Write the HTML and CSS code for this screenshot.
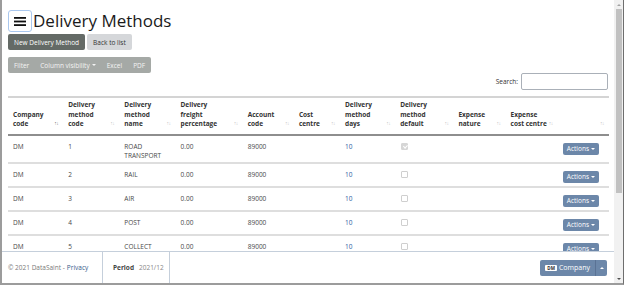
FILE: index.html
```html
<!DOCTYPE html>
<html>
<head>
  <title>Delivery Methods</title>
  <meta http-equiv="Content-Type" content="text/html;charset=utf-8" />
  <meta name="viewport" content="width=device-width">
  <link rel="stylesheet" href="styles.css">
</head>
<body>
<div class="window">
  <div class="page">
    <main class="content">
      <div class="heading">
        <button class="menu-toggle" type="button" aria-label="Toggle menu">
          <svg width="12" height="9" viewBox="0 0 12 9">
            <rect y="0" width="12" height="1.8"/>
            <rect y="3.6" width="12" height="1.8"/>
            <rect y="7.2" width="12" height="1.8"/>
          </svg>
        </button>
        <h1>Delivery Methods</h1>
      </div>

      <div class="toolbar">
        <a class="btn btn-dark" href="#">New Delivery Method</a>
        <a class="btn btn-light" href="#">Back to list</a>
      </div>

      <div class="dt-buttons">
        <button type="button">Filter</button>
        <button type="button">Column visibility <span class="caret"></span></button>
        <button type="button">Excel</button>
        <button type="button">PDF</button>
      </div>

      <div class="dt-search">
        <label for="search">Search:</label>
        <input type="text" id="search">
      </div>

      <table class="grid">
        <colgroup>
          <col style="width:55px"><col style="width:56px"><col style="width:56px">
          <col style="width:67px"><col style="width:51px"><col style="width:46px">
          <col style="width:55px"><col style="width:58px"><col style="width:52px">
          <col style="width:52px"><col style="width:51px">
        </colgroup>
        <thead>
          <tr>
            <th><div class="th-inner"><span>Company<br>code</span><span class="sort asc">↑↓</span></div></th>
            <th><div class="th-inner"><span>Delivery<br>method<br>code</span><span class="sort">↑↓</span></div></th>
            <th><div class="th-inner"><span>Delivery<br>method<br>name</span><span class="sort">↑↓</span></div></th>
            <th><div class="th-inner"><span>Delivery<br>freight<br>percentage</span><span class="sort">↑↓</span></div></th>
            <th><div class="th-inner"><span>Account<br>code</span><span class="sort">↑↓</span></div></th>
            <th><div class="th-inner"><span>Cost<br>centre</span><span class="sort">↑↓</span></div></th>
            <th><div class="th-inner"><span>Delivery<br>method<br>days</span><span class="sort">↑↓</span></div></th>
            <th><div class="th-inner"><span>Delivery<br>method<br>default</span><span class="sort">↑↓</span></div></th>
            <th><div class="th-inner"><span>Expense<br>nature</span><span class="sort">↑↓</span></div></th>
            <th><div class="th-inner"><span>Expense<br>cost centre</span><span class="sort">↑↓</span></div></th>
            <th><div class="th-inner"><span></span><span class="sort">↑↓</span></div></th>
          </tr>
        </thead>
        <tbody>
          <tr>
            <td>DM</td><td>1</td><td>ROAD<br>TRANSPORT</td><td>0.00</td><td>89000</td><td></td>
            <td><a href="#">10</a></td><td><input type="checkbox" checked disabled></td><td></td><td></td>
            <td class="cell-actions"><button class="btn-actions" type="button">Actions <span class="caret"></span></button></td>
          </tr>
          <tr>
            <td>DM</td><td>2</td><td>RAIL</td><td>0.00</td><td>89000</td><td></td>
            <td><a href="#">10</a></td><td><input type="checkbox" disabled></td><td></td><td></td>
            <td class="cell-actions"><button class="btn-actions" type="button">Actions <span class="caret"></span></button></td>
          </tr>
          <tr>
            <td>DM</td><td>3</td><td>AIR</td><td>0.00</td><td>89000</td><td></td>
            <td><a href="#">10</a></td><td><input type="checkbox" disabled></td><td></td><td></td>
            <td class="cell-actions"><button class="btn-actions" type="button">Actions <span class="caret"></span></button></td>
          </tr>
          <tr>
            <td>DM</td><td>4</td><td>POST</td><td>0.00</td><td>89000</td><td></td>
            <td><a href="#">10</a></td><td><input type="checkbox" disabled></td><td></td><td></td>
            <td class="cell-actions"><button class="btn-actions" type="button">Actions <span class="caret"></span></button></td>
          </tr>
          <tr>
            <td>DM</td><td>5</td><td>COLLECT</td><td>0.00</td><td>89000</td><td></td>
            <td><a href="#">10</a></td><td><input type="checkbox" disabled></td><td></td><td></td>
            <td class="cell-actions"><button class="btn-actions" type="button">Actions <span class="caret"></span></button></td>
          </tr>
        </tbody>
      </table>
    </main>

    <footer class="footer">
      <div class="copyright">&copy; 2021 DataSaint - <a href="#">Privacy</a></div>
      <div class="period"><b>Period</b> 2021/12</div>
      <div class="company-group">
        <button class="company-main" type="button"><span class="badge">DM</span>Company</button>
        <button class="company-toggle" type="button"><span class="caret-up"></span></button>
      </div>
    </footer>
  </div>

  <div class="scrollbar">
    <span class="sb-arrow up"></span>
    <span class="sb-thumb"></span>
    <span class="sb-track"></span>
    <span class="sb-arrow down"></span>
  </div>
</div>
</body>
</html>
```

FILE: styles.css
```css
html, body { margin: 0; }
body {
  font-family: "Open Sans", sans-serif;
  font-size: 6.5px;
  color: #444;
  background: #fff;
}
a { color: #2f62a3; text-decoration: none; }
button { font-family: inherit; }

.window {
  width: 624px;
  height: 285px;
  box-sizing: border-box;
  border-left: 2px solid #9c9c9c;
  border-bottom: 2px solid #9c9c9c;
  border-right: 1px solid #6e6e6e;
  display: flex;
  overflow: hidden;
}
.page {
  flex: 1;
  min-width: 0;
  display: flex;
  flex-direction: column;
}
.content {
  flex: 1;
  min-height: 0;
  overflow: hidden;
  padding: 10px 6px 0 6px;
}

/* heading */
.heading {
  display: flex;
  align-items: center;
  gap: 1px;
}
.menu-toggle {
  width: 24px;
  height: 22px;
  padding: 0;
  border: 1px solid #a9c7ee;
  border-radius: 3px;
  background: #fff;
  display: flex;
  align-items: center;
  justify-content: center;
}
.menu-toggle svg { fill: #111; }
.heading h1 {
  margin: 0;
  font-size: 17px;
  font-weight: 500;
  line-height: 22px;
  color: #1a1a1a;
}

/* toolbar buttons */
.toolbar {
  display: flex;
  gap: 2px;
  margin-top: 2px;
}
.btn {
  display: inline-flex;
  align-items: center;
  height: 16px;
  padding: 0 6px;
  border-radius: 2px;
  font-size: 6.5px;
}
.btn-dark { background: #646a66; color: #fff; }
.btn-light { background: #d5d7da; color: #333; }

.dt-buttons {
  display: inline-flex;
  margin-top: 7px;
  height: 16px;
  background: #a5a9a6;
  border-radius: 2px;
  padding: 0 0.5px;
}
.dt-buttons button {
  border: 0;
  background: none;
  color: #f4f4f4;
  font-size: 6.5px;
  padding: 0 5.5px;
  display: inline-flex;
  align-items: center;
  gap: 2px;
}
.caret {
  display: inline-block;
  width: 0;
  height: 0;
  border-top: 2px solid currentColor;
  border-left: 2px solid transparent;
  border-right: 2px solid transparent;
}

.dt-search {
  display: flex;
  justify-content: flex-end;
  align-items: center;
  gap: 3px;
}
.dt-search label { color: #333; }
.dt-search input {
  width: 87px;
  height: 17px;
  box-sizing: border-box;
  border: 1px solid #aab0b8;
  border-radius: 2px;
  padding: 0 3px;
}

/* table */
.grid {
  width: 601px;
  margin-top: 6px;
  border-collapse: collapse;
  table-layout: fixed;
}
.grid th {
  text-align: left;
  vertical-align: bottom;
  font-weight: 700;
  color: #333;
  line-height: 9.5px;
  padding: 2px 5px 5px;
  border-top: 2px solid #d4d4d4;
  border-bottom: 2px solid #8e8e8e;
}
.th-inner {
  display: flex;
  justify-content: space-between;
  align-items: flex-end;
}
.sort {
  color: #c4c4c4;
  font-size: 5px;
  font-weight: 400;
  letter-spacing: -0.5px;
  line-height: 9.5px;
}
.sort.asc { color: #777; }
.grid td {
  vertical-align: top;
  line-height: 9px;
  padding: 6px 5px 2px;
  border-bottom: 2px solid #dedede;
  color: #484848;
}
.grid input[type=checkbox] {
  appearance: none;
  width: 7px;
  height: 7px;
  margin: 1px 0 0 1px;
  border: 1px solid #cfcfcf;
  border-radius: 1px;
  background: #fff;
  position: relative;
}
.grid input[type=checkbox]:checked {
  background: #d6d6d6;
  border-color: #d6d6d6;
}
.grid input[type=checkbox]:checked::after {
  content: "";
  position: absolute;
  left: 1.5px;
  top: 0;
  width: 1.5px;
  height: 3px;
  border: solid #fff;
  border-width: 0 1px 1px 0;
  transform: rotate(45deg);
}
.cell-actions {
  text-align: right;
  padding-right: 10px !important;
}
.btn-actions {
  display: inline-flex;
  align-items: center;
  gap: 2px;
  height: 12px;
  margin: 1px 0;
  padding: 0 4px;
  border: 0;
  border-radius: 2px;
  background: #6c87a9;
  color: #fff;
  font-size: 6.5px;
  vertical-align: top;
}

/* footer */
.footer {
  height: 32px;
  flex-shrink: 0;
  box-sizing: border-box;
  border-top: 1px solid #c5cfdb;
  display: flex;
  background: #fff;
}
.copyright,
.period {
  display: flex;
  align-items: center;
  border-right: 1px solid #c5cfdb;
  box-sizing: border-box;
}
.copyright {
  width: 101px;
  padding-left: 6px;
  color: #7a7a7a;
}
.copyright a { color: #34598a; margin-left: 2px; }
.period {
  width: 67px;
  padding-left: 10px;
  gap: 5px;
  color: #888;
}
.period b { color: #444; }
.company-group {
  display: flex;
  align-self: center;
  margin-left: auto;
  margin-right: 7px;
  height: 16px;
  border-radius: 2px;
  overflow: hidden;
  background: #6c87a9;
}
.company-group button {
  border: 0;
  background: none;
  color: #fff;
  display: flex;
  align-items: center;
  padding: 0;
}
.company-main {
  padding: 0 5px !important;
  font-size: 7px;
  gap: 2px;
}
.badge {
  background: #fff;
  color: #2a2a2a;
  font-size: 4.5px;
  font-weight: 700;
  line-height: 6px;
  padding: 0 2px;
  border-radius: 1px;
}
.company-toggle {
  width: 12px;
  justify-content: center;
  border-left: 1px solid #5a7294 !important;
}
.caret-up {
  width: 0;
  height: 0;
  border-bottom: 2px solid #fff;
  border-left: 2px solid transparent;
  border-right: 2px solid transparent;
}

/* scrollbar */
.scrollbar {
  width: 9px;
  flex-shrink: 0;
  display: flex;
  flex-direction: column;
  background: #f1f1f1;
}
.sb-arrow {
  height: 9px;
  display: flex;
  align-items: center;
  justify-content: center;
}
.sb-arrow::before {
  content: "";
  border-left: 2px solid transparent;
  border-right: 2px solid transparent;
}
.sb-arrow.up::before { border-bottom: 2px solid #a3a3a3; }
.sb-arrow.down::before { border-top: 2px solid #505050; }
.sb-thumb {
  height: 184px;
  margin: 0 1px 0 2px;
  background: #c1c1c1;
}
.sb-track { flex: 1; }
```
